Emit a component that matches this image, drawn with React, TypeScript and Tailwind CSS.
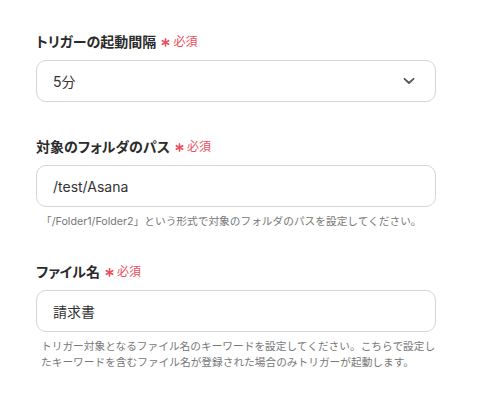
import React from 'react';

const font = "font-['Inter','Noto_Sans_CJK_JP',sans-serif] [font-feature-settings:'palt']";

const Required: React.FC = () => (
    <span className="ml-[5px] inline-flex items-center gap-[3px] text-[12px] font-normal text-[#ec4f5f]">
        <svg width="9" height="9" viewBox="0 0 10 10" className="mt-[1px]">
            <g stroke="#ec4f5f" strokeWidth="1.8" strokeLinecap="round">
                <line x1="5" y1="1" x2="5" y2="9" />
                <line x1="1.5" y1="3" x2="8.5" y2="7" />
                <line x1="1.5" y1="7" x2="8.5" y2="3" />
            </g>
        </svg>
        必須
    </span>
);

const Label: React.FC<{ text: string }> = ({ text }) => (
    <div className="flex h-5 items-center text-[14px] font-bold leading-5 text-[#2b2b2b]">
        {text}
        <Required />
    </div>
);

const Field: React.FC<{ label: string; value: string; select?: boolean; help?: string[] }> = ({ label, value, select, help }) => (
    <div>
        <Label text={label} />
        <div className="mt-2 flex h-[42px] items-center justify-between rounded-[10px] border border-[#d3d6dc] bg-white px-4 text-[14px] text-[#333]">
            <span>{value}</span>
            {select && (
                <svg width="12" height="8" viewBox="0 0 12 8" className="mr-[4px]">
                    <path d="M1.5 1.8 L6 6 L10.5 1.8" fill="none" stroke="#555" strokeWidth="1.8" strokeLinecap="round" strokeLinejoin="round" />
                </svg>
            )}
        </div>
        {help && (
            <div className="mt-[7px] pl-[5px] text-[10.7px] leading-4 whitespace-nowrap text-[#777] [font-feature-settings:normal]">
                {help.map(line => (
                    <p key={line}>{line}</p>
                ))}
            </div>
        )}
    </div>
);

export default function App() {
    return (
        <div className={`min-h-screen w-full bg-white pt-8 pl-9 ${font}`}>
            <div className="w-[400px]">
                <Field label="トリガーの起動間隔" value="5分" select />
                <div className="mt-[35px]">
                    <Field
                        label="対象のフォルダのパス"
                        value="/test/Asana"
                        help={['「/Folder1/Folder2」という形式で対象のフォルダのパスを設定してください。']}
                    />
                </div>
                <div className="mt-[32px]">
                    <Field
                        label="ファイル名"
                        value="請求書"
                        help={[
                            'トリガー対象となるファイル名のキーワードを設定してください。こちらで設定し',
                            'たキーワードを含むファイル名が登録された場合のみトリガーが起動します。',
                        ]}
                    />
                </div>
            </div>
        </div>
    );
}
